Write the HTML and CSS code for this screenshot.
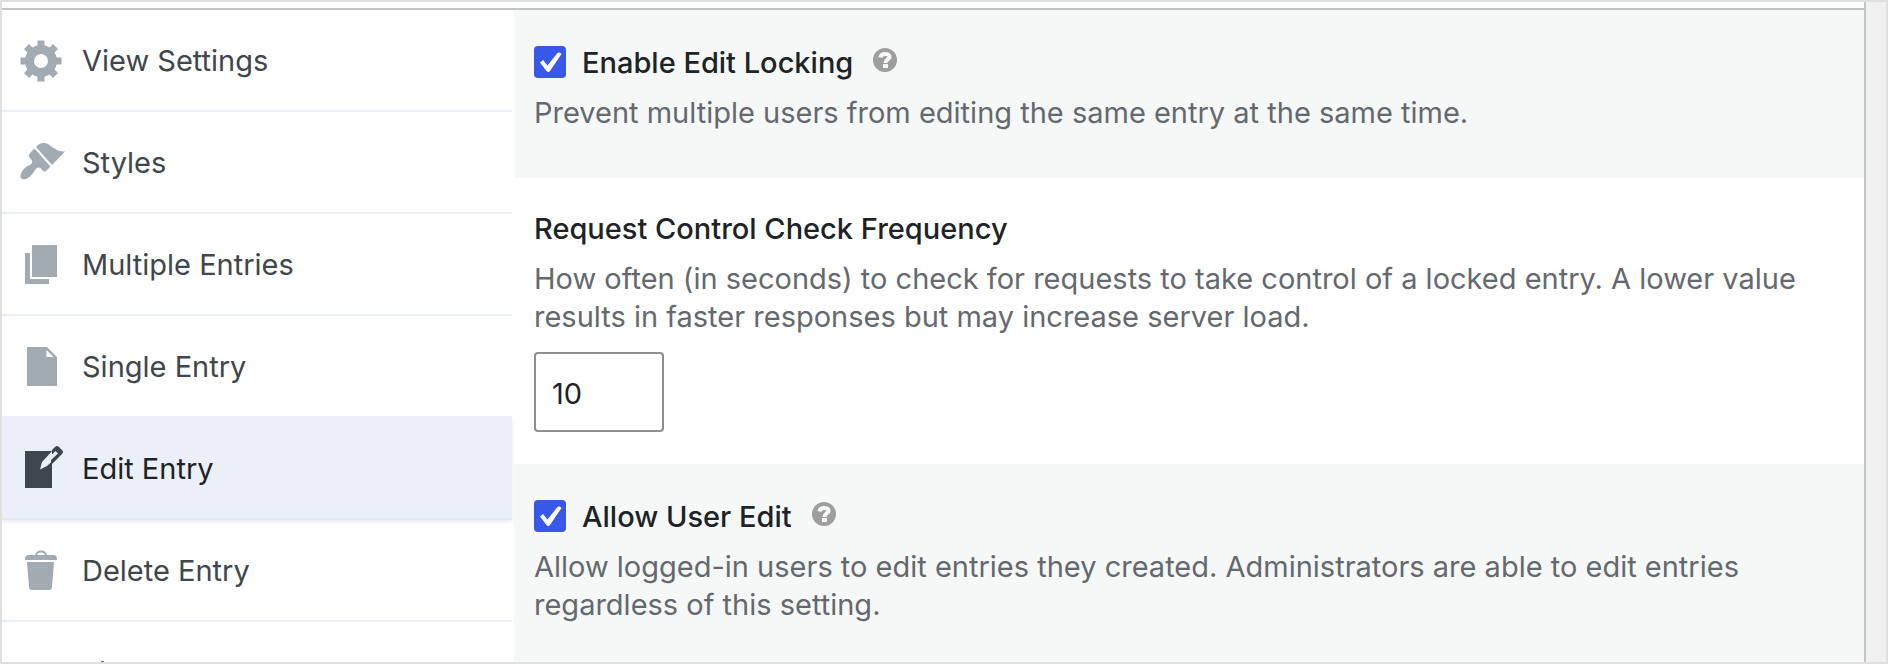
FILE: index.html
```html
<!DOCTYPE html>
<html lang="en">
<head>
  <meta charset="UTF-8">
  <meta name="viewport" content="width=device-width, initial-scale=1.0">
  <title>Edit Entry Settings</title>
  <link rel="stylesheet" href="styles.css">
</head>
<body>
  <div class="panel">
    <nav class="sidebar">
      <a href="#view-settings" class="tab">
        <svg class="icon" viewBox="0 0 48 48">
          <g fill="currentColor">
            <path fill-rule="evenodd" d="M24 8a16 16 0 1 0 0 32a16 16 0 1 0 0-32zM24 17a7 7 0 1 1 0 14a7 7 0 1 1 0-14z"/>
            <path d="M20.5 3.5h7v8h-7zM20.5 36.5h7v8h-7zM3.5 20.5h8v7h-8zM36.5 20.5h8v7h-8z"/>
            <path d="M20.5 3.5h7v8h-7zM20.5 36.5h7v8h-7zM3.5 20.5h8v7h-8zM36.5 20.5h8v7h-8z" transform="rotate(45 24 24)"/>
          </g>
        </svg>
        <span>View Settings</span>
      </a>
      <a href="#styles" class="tab">
        <svg class="icon" viewBox="0 0 48 48">
          <g fill="currentColor">
            <path d="M19 8C22 4 27 3 31 5C36 8 40 13 48 12.5L35 26z"/>
            <path d="M17.5 9.5L33.5 27.5L29 32C28 33 26 32 25 31C24 29 22 28 20 29C17 31 16 36 11 39C8 41 3 41 3.5 37C4 32 8 28 13 26C15 25 16 23 14 20C12 18 11 17 13 14z"/>
          </g>
        </svg>
        <span>Styles</span>
      </a>
      <a href="#multiple-entries" class="tab">
        <svg class="icon" viewBox="0 0 48 48">
          <path fill="currentColor" d="M15 4h25v32H15zM8 12h5v26h19v5H8z"/>
        </svg>
        <span>Multiple Entries</span>
      </a>
      <a href="#single-entry" class="tab">
        <svg class="icon" viewBox="0 0 48 48">
          <path fill="currentColor" fill-rule="evenodd" d="M10 4h20l10 10v29H10zM29.5 7v7h7z"/>
        </svg>
        <span>Single Entry</span>
      </a>
      <a href="#edit-entry" class="tab active" aria-current="page">
        <svg class="icon" viewBox="0 0 48 48">
          <path fill="currentColor" d="M8 6h27v37H8z"/>
          <path fill="#ebeff7" d="M23 24.5L25 17L37 4L43 9L30 21z"/>
          <path fill="currentColor" d="M35 5L38 2Q40 0 42 2L45 5Q47 7 45 9L34 20V15L41 8.5L38.5 6L35 9.5z"/>
        </svg>
        <span>Edit Entry</span>
      </a>
      <a href="#delete-entry" class="tab">
        <svg class="icon" viewBox="0 0 48 48">
          <path fill="none" stroke="currentColor" stroke-width="2" d="M19 9C19 3 29 3 29 9"/>
          <path fill="currentColor" d="M8 13v-1q0-4 4-4h24q4 0 4 4v1zM10 15h27l-2 25q0 3-3 3H15q-3 0-3-3z"/>
        </svg>
        <span>Delete Entry</span>
      </a>
      <a href="#filter-sort" class="tab">
        <svg class="icon" viewBox="0 0 48 48">
          <path fill="currentColor" d="M8 16h32v4H8zM13 25h22v4H13zM19 34h10v4H19z"/>
        </svg>
        <span>Filter &amp; Sort</span>
      </a>
    </nav>

    <main class="settings">
      <section class="setting shaded">
        <div class="check-row">
          <input type="checkbox" id="edit-locking" checked>
          <label for="edit-locking">Enable Edit Locking</label>
          <svg class="help" viewBox="0 0 24 24">
            <circle cx="12" cy="12" r="12" fill="#9e9e9e"/>
            <path fill="none" stroke="#f6f7f7" stroke-width="4" d="M7.5 9.5C8 4.5 17 5 16.5 9C16 11.5 12.5 11.5 12.5 15"/>
            <path fill="#f6f7f7" d="M10 16h5v4h-5z"/>
          </svg>
        </div>
        <p>Prevent multiple users from editing the same entry at the same time.</p>
      </section>

      <section class="setting">
        <label for="frequency">Request Control Check Frequency</label>
        <p>How often (in seconds) to check for requests to take control of a locked entry. A lower value results in faster responses but may increase server load.</p>
        <input type="number" id="frequency" value="10">
      </section>

      <section class="setting shaded">
        <div class="check-row">
          <input type="checkbox" id="user-edit" checked>
          <label for="user-edit">Allow User Edit</label>
          <svg class="help" viewBox="0 0 24 24">
            <circle cx="12" cy="12" r="12" fill="#9e9e9e"/>
            <path fill="none" stroke="#f6f7f7" stroke-width="4" d="M7.5 9.5C8 4.5 17 5 16.5 9C16 11.5 12.5 11.5 12.5 15"/>
            <path fill="#f6f7f7" d="M10 16h5v4h-5z"/>
          </svg>
        </div>
        <p>Allow logged-in users to edit entries they created. Administrators are able to edit entries regardless of this setting.</p>
      </section>
    </main>
  </div>
</body>
</html>
```

FILE: styles.css
```css
* {
  box-sizing: border-box;
}
body {
  margin: 0;
  height: 100vh;
  overflow: hidden;
  border: 2px solid #e0e0e0;
  padding-right: 20px;
  background-color: #f0f0f0;
  font-family: Inter, sans-serif;
  font-size: 29px;
  line-height: 38px;
}
.panel {
  display: flex;
  height: 100%;
  overflow: hidden;
  padding-top: 6px;
  border-right: 2px solid #c3c4c7;
  background-color: #fff;
}
.sidebar {
  flex: 0 0 510px;
  border-top: 2px solid #c3c4c7;
}
.tab {
  display: flex;
  align-items: center;
  gap: 17px;
  height: 102px;
  padding: 2px 0 0 15px;
  border-bottom: 2px solid #ebeff7;
  color: #40464d;
  text-decoration: none;
}
.icon {
  width: 48px;
  height: 48px;
  color: #a2aab2;
}
.tab.active {
  height: 104px;
  margin-top: -2px;
  padding-top: 4px;
  background-color: #ebeff7;
  border-color: #e2e8f0;
  box-shadow: 0 2px 4px rgba(0, 0, 0, 0.08);
  color: #1d2327;
}
.active .icon {
  color: #40464d;
}
.settings {
  flex: 1;
  padding-left: 2px;
  border-top: 2px solid #c3c4c7;
}
.setting {
  padding: 32px 20px;
}
.shaded {
  background-color: #f6f7f7;
}
.setting label {
  color: #1d2327;
  font-weight: 500;
}
.setting p {
  margin: 12px 0 14px;
  color: #646970;
}
.check-row {
  display: flex;
  align-items: center;
}
.check-row label {
  padding-top: 2px;
}
.help {
  width: 24px;
  height: 24px;
  margin: 0 0 4px 20px;
}
input[type="checkbox"] {
  appearance: none;
  width: 32px;
  height: 32px;
  margin: 0 16px 0 0;
  border-radius: 4px;
  background: #3858e9 url("data:image/svg+xml,%3Csvg xmlns='http://www.w3.org/2000/svg' viewBox='0 0 32 32'%3E%3Cpath fill='white' d='M6 16.5L9 14L13.5 19.5L23 7.5Q25 5.5 27.5 8L16 25Q14.5 27 12.5 25z'/%3E%3C/svg%3E");
}
input[type="number"] {
  display: block;
  width: 130px;
  height: 80px;
  margin-top: 16px;
  padding: 2px 16px 0;
  border: 2px solid #8f8f8f;
  border-radius: 4px;
  background-color: #fff;
  color: #1d2327;
  font: inherit;
}
```
